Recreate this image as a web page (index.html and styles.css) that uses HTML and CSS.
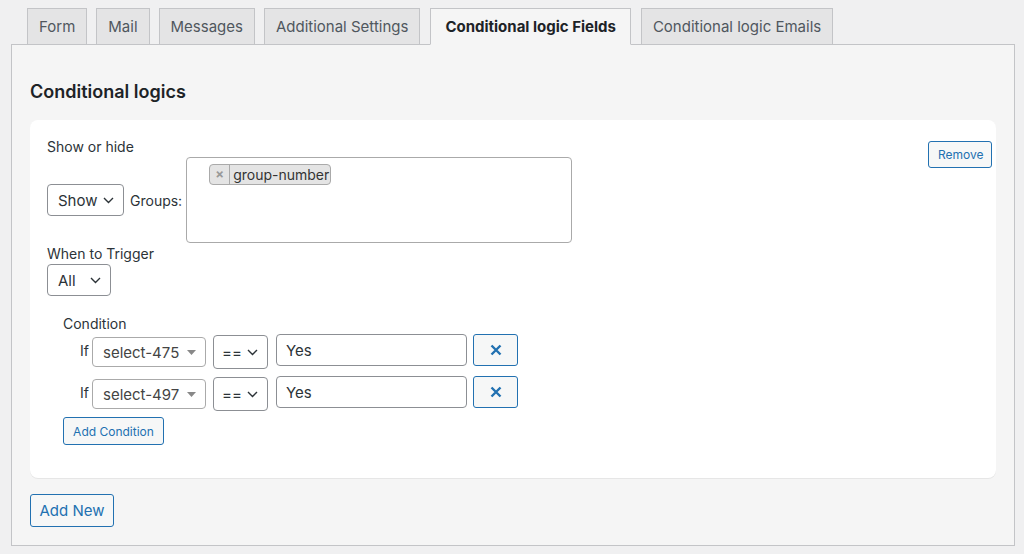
FILE: index.html
```html
<!DOCTYPE html>
<html lang="en">
<head>
  <meta charset="UTF-8">
  <title>Conditional logic Fields</title>
  <link rel="stylesheet" href="styles.css">
</head>
<body>
  <nav class="tabs">
    <a class="tab">Form</a>
    <a class="tab">Mail</a>
    <a class="tab">Messages</a>
    <a class="tab">Additional Settings</a>
    <a class="tab active">Conditional logic Fields</a>
    <a class="tab">Conditional logic Emails</a>
  </nav>

  <div class="panel">
    <h2>Conditional logics</h2>

    <div class="card">
      <button class="btn btn-small remove">Remove</button>

      <div class="label">Show or hide</div>
      <div class="show-row">
        <div class="select select-show">
          <span>Show</span>
          <svg class="chev" width="11" height="7" viewBox="0 0 11 7"><path d="M1 1l4.5 4.5L10 1" fill="none" stroke="#2c3338" stroke-width="1.4"/></svg>
        </div>
        <span class="groups-label">Groups:</span>
        <div class="multi">
          <span class="tag"><span class="tag-x">×</span><span class="tag-text">group-number</span></span>
        </div>
      </div>

      <div class="label label-trigger">When to Trigger</div>
      <div class="select select-all">
        <span>All</span>
        <svg class="chev" width="11" height="7" viewBox="0 0 11 7"><path d="M1 1l4.5 4.5L10 1" fill="none" stroke="#2c3338" stroke-width="1.4"/></svg>
      </div>

      <div class="conditions">
        <div class="label">Condition</div>

        <div class="cond-row">
          <span class="if">If</span>
          <div class="s2">
            <span>select-475</span>
            <svg width="9" height="5" viewBox="0 0 9 5"><path d="M0 0h9L4.5 5z" fill="#888"/></svg>
          </div>
          <div class="select select-op">
            <span>==</span>
            <svg class="chev" width="11" height="7" viewBox="0 0 11 7"><path d="M1 1l4.5 4.5L10 1" fill="none" stroke="#2c3338" stroke-width="1.4"/></svg>
          </div>
          <input class="text-input" value="Yes">
          <button class="btn btn-x"><svg width="12" height="12" viewBox="0 0 12 12"><path d="M1.5 1.5l9 9M10.5 1.5l-9 9" stroke="#2271b1" stroke-width="2.4"/></svg></button>
        </div>

        <div class="cond-row">
          <span class="if">If</span>
          <div class="s2">
            <span>select-497</span>
            <svg width="9" height="5" viewBox="0 0 9 5"><path d="M0 0h9L4.5 5z" fill="#888"/></svg>
          </div>
          <div class="select select-op">
            <span>==</span>
            <svg class="chev" width="11" height="7" viewBox="0 0 11 7"><path d="M1 1l4.5 4.5L10 1" fill="none" stroke="#2c3338" stroke-width="1.4"/></svg>
          </div>
          <input class="text-input" value="Yes">
          <button class="btn btn-x"><svg width="12" height="12" viewBox="0 0 12 12"><path d="M1.5 1.5l9 9M10.5 1.5l-9 9" stroke="#2271b1" stroke-width="2.4"/></svg></button>
        </div>

        <button class="btn btn-small add-cond">Add Condition</button>
      </div>
    </div>

    <button class="btn add-new">Add New</button>
  </div>
</body>
</html>
```

FILE: styles.css
```css
body {
  margin: 0;
  padding: 8px 9px 9px 11px;
  background: #f0f0f1;
  font-family: Inter, "Noto Sans", sans-serif;
  font-size: 14px;
  color: #2c3338;
}

.tabs {
  display: flex;
  padding-left: 16px;
  margin-bottom: -1px;
}

.tab {
  display: block;
  height: 35px;
  line-height: 35px;
  padding: 0 11px;
  margin-right: 9px;
  background: #e4e4e5;
  border: 1px solid #c3c4c7;
  font-size: 15px;
  color: #50575e;
  cursor: pointer;
}

.tab.active {
  background: #f5f5f5;
  border-bottom-color: #f5f5f5;
  color: #1d2327;
  font-weight: 700;
  padding: 0 14px;
  margin: 0 10px 0 1px;
}

.panel {
  background: #f5f5f5;
  border: 1px solid #c3c4c7;
  padding: 0 18px 18px 18px;
}

h2 {
  margin: 35px 0 16px;
  font-size: 18px;
  line-height: 24px;
  font-weight: 600;
  color: #1d2327;
}

.card {
  background: #fff;
  border-radius: 8px;
  padding: 17px 4px 33px 17px;
  box-shadow: 0 1px 0 #e6e6e6;
}

.label {
  line-height: 20px;
}

.label-trigger {
  margin-top: 1px;
}

.show-row {
  display: flex;
  align-items: center;
}

.select {
  box-sizing: border-box;
  display: flex;
  align-items: center;
  justify-content: space-between;
  height: 32px;
  padding: 0 9px 0 10px;
  border: 1px solid #8c8f94;
  border-radius: 4px;
  background: #fff;
  font-size: 15px;
  color: #2c3338;
}

.select-show { width: 77px; }
.select-all { width: 64px; }

.groups-label {
  margin: 0 4px 0 6px;
}

.multi {
  box-sizing: border-box;
  width: 386px;
  height: 86px;
  padding: 6px 0 0 22px;
  border: 1px solid #aaa;
  border-radius: 4px;
  background: #fff;
}

.tag {
  display: inline-flex;
  align-items: center;
  height: 21px;
  box-sizing: border-box;
  border: 1px solid #aaa;
  border-radius: 4px;
  background: #e4e4e4;
  color: #333;
}

.tag-x {
  width: 19px;
  text-align: center;
  border-right: 1px solid #aaa;
  color: #999;
  font-weight: 700;
  font-size: 13px;
  line-height: 19px;
}

.tag-text {
  padding: 0 1px 0 3px;
  line-height: 19px;
}

.conditions {
  margin-top: 18px;
  padding-left: 16px;
}

.cond-row {
  display: flex;
  align-items: flex-start;
  height: 34px;
  padding-left: 17px;
  margin-bottom: 8px;
}

.if {
  margin-top: 7px;
  line-height: 20px;
  width: 12px;
}

.s2 {
  box-sizing: border-box;
  display: flex;
  align-items: center;
  justify-content: space-between;
  width: 114px;
  height: 30px;
  margin-top: 3px;
  padding: 0 9px 0 10px;
  border: 1px solid #aaa;
  border-radius: 4px;
  font-size: 15px;
  color: #444;
}

.select-op {
  width: 55px;
  height: 34px;
  margin: 1px 0 0 7px;
  padding: 0 9px 0 8px;
}

.text-input {
  box-sizing: border-box;
  width: 191px;
  height: 32px;
  margin-left: 8px;
  padding: 0 9px;
  border: 1px solid #8c8f94;
  border-radius: 4px;
  font-family: inherit;
  font-size: 15px;
  color: #2c3338;
}

.btn {
  box-sizing: border-box;
  border: 1px solid #2271b1;
  border-radius: 3px;
  background: #f6f7f7;
  color: #2271b1;
  font-family: inherit;
  cursor: pointer;
}

.btn-x {
  display: flex;
  align-items: center;
  justify-content: center;
  width: 45px;
  height: 32px;
  margin-left: 6px;
}

.btn-small {
  height: 27px;
  font-size: 12px;
  padding: 0 9px;
}

.remove {
  float: right;
  margin-top: 4px;
  width: 64px;
}

.add-cond {
  width: 101px;
  height: 28px;
  margin-top: -1px;
}

.add-new {
  margin-top: 16px;
  width: 84px;
  height: 33px;
  font-size: 15px;
}
```
